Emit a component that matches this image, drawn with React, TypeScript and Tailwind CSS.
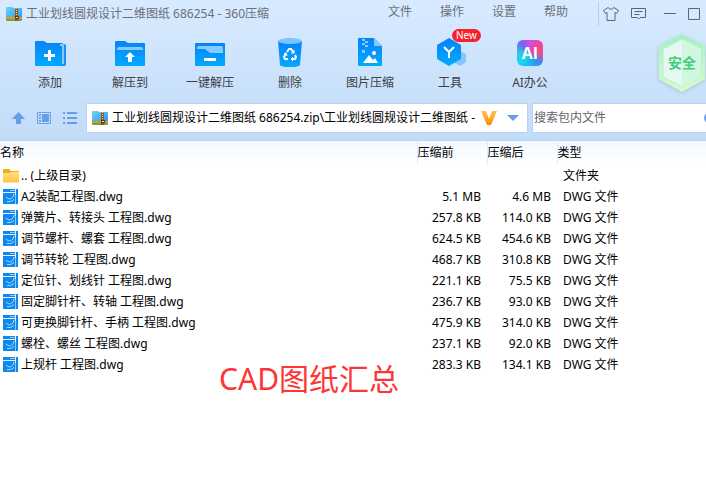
import type { ReactNode } from "react";

type Row = {
  name: string;
  before: string;
  after: string;
  type: string;
};

const rows: Row[] = [
  { name: "A2装配工程图.dwg", before: "5.1 MB", after: "4.6 MB", type: "DWG 文件" },
  { name: "弹簧片、转接头 工程图.dwg", before: "257.8 KB", after: "114.0 KB", type: "DWG 文件" },
  { name: "调节螺杆、螺套 工程图.dwg", before: "624.5 KB", after: "454.6 KB", type: "DWG 文件" },
  { name: "调节转轮 工程图.dwg", before: "468.7 KB", after: "310.8 KB", type: "DWG 文件" },
  { name: "定位针、划线针 工程图.dwg", before: "221.1 KB", after: "75.5 KB", type: "DWG 文件" },
  { name: "固定脚针杆、转轴 工程图.dwg", before: "236.7 KB", after: "93.0 KB", type: "DWG 文件" },
  { name: "可更换脚针杆、手柄 工程图.dwg", before: "475.9 KB", after: "314.0 KB", type: "DWG 文件" },
  { name: "螺栓、螺丝 工程图.dwg", before: "237.1 KB", after: "92.0 KB", type: "DWG 文件" },
  { name: "上规杆 工程图.dwg", before: "283.3 KB", after: "134.1 KB", type: "DWG 文件" },
];

function Gradients() {
  return (
    <svg className="absolute size-0" aria-hidden="true">
      <defs>
        <linearGradient id="blue" x1="0" y1="0" x2="0" y2="1">
          <stop offset="0" stopColor="#0882f8" />
          <stop offset="1" stopColor="#00aaff" />
        </linearGradient>
        <linearGradient id="sky" x1="0" y1="0" x2="1" y2="1">
          <stop offset="0" stopColor="#6fd3fa" />
          <stop offset="1" stopColor="#2a9be8" />
        </linearGradient>
        <linearGradient id="gold" x1="0" y1="0" x2="0" y2="1">
          <stop offset="0" stopColor="#ffe08a" />
          <stop offset="1" stopColor="#ffc53d" />
        </linearGradient>
        <linearGradient id="vip" x1="0" y1="0" x2="0" y2="1">
          <stop offset="0" stopColor="#ffc44a" />
          <stop offset="1" stopColor="#ff8a00" />
        </linearGradient>
        <linearGradient id="shield" x1="0" y1="0" x2="0" y2="1">
          <stop offset="0" stopColor="#9df3bd" />
          <stop offset="0.6" stopColor="#c4f8cd" />
          <stop offset="1" stopColor="#d6fbc9" />
        </linearGradient>
      </defs>
    </svg>
  );
}

function ArchiveIcon() {
  return (
    <svg width="16" height="14" viewBox="0 0 16 14" className="shrink-0">
      <path d="M0 1q0-1 1-1h5l1 1h8q1 0 1 1v9H0z" fill="url(#sky)" />
      <path d="M0 10h16v2H0z" fill="#e8912a" />
      <path d="M0 12h16v1q0 1-1 1H1q-1 0-1-1z" fill="#62a843" />
      <path d="M9 2h3v12H9z" fill="#9a5420" />
      <path d="M10 3h1v1h-1zM10 5h1v1h-1zM10 7h1v1h-1z" fill="#f4c67a" />
      <path d="M9 9h4v3H9z" fill="#6b3410" />
      <path d="M10 10h2v1h-2z" fill="#ffe29a" />
    </svg>
  );
}

function DwgIcon() {
  return (
    <svg width="15" height="15" viewBox="0 0 15 15" className="shrink-0">
      <path d="M0 0h15v15H0z" fill="#0c88ee" />
      <path d="M0 3.500h12M12.500 0v6" fill="none" stroke="#e6f4ff" />
      <path d="M7 1.500h5M12.500 6v9" fill="none" stroke="#8accff" />
      <path d="M3 8q4 4 7 0l1-3M4 12.500q4 1 7-2" fill="none" stroke="#a5d8ff" />
    </svg>
  );
}

function FolderIcon() {
  return (
    <svg width="16" height="14" viewBox="0 0 16 14" className="shrink-0">
      <path d="M0 1q0-1 1-1h5l2 2h7q1 0 1 1v5H0z" fill="#f0ad16" />
      <path d="M0 4h7l1-1h8v9.500q0 1-1 1H1q-1 0-1-1z" fill="url(#gold)" />
    </svg>
  );
}

const icons: Record<string, ReactNode> = {
  add: (
    <>
      <path d="M1 5q0-1 1-1h8l3 2h15q1 0 1 1v22H2q-1 0-1-1z" fill="url(#blue)" />
      <path d="M28 7h2q2 0 2 2v19q0 1-2 1h-2z" fill="#1690fb" />
      <path d="M26 7h3q1 0 1 1v19h-2V9h-2z" fill="#86cbff" />
      <path d="M14 13h3v4h4v3h-4v4h-3v-4h-4v-3h4z" fill="#fff" />
    </>
  ),
  extract: (
    <>
      <path d="M1 5q0-1 1-1h9l3 2h16q1 0 1 1v21q0 1-1 1H2q-1 0-1-1z" fill="url(#blue)" />
      <path d="M3 12q0-2 2-2h22q2 0 2 2v1H3z" fill="#86cbff" />
      <path d="M16 15l5 5h-3v5h-4v-5h-3z" fill="#fff" />
    </>
  ),
  quick: (
    <>
      <rect x="1" y="6" width="30" height="23" rx="1" fill="url(#blue)" />
      <path d="M3 11q0-2 2-2h22q2 0 2 2v5H16l-5-4H3z" fill="#86cbff" />
      <path d="M10 21h12v3H10z" fill="#fff" />
    </>
  ),
  remove: (
    <>
      <path d="M4 4h24l-2 24q-1 2-10 2T6 28z" fill="url(#blue)" />
      <ellipse cx="16" cy="4" rx="12" ry="3" fill="#78c5ff" />
      <g fill="none" stroke="#fff" strokeWidth="2">
        <path d="M13 15l2-3h2l3 4M21 18l1 2-1 2h-4M14 22h-3l-1-2 2-4" />
        <path d="M17 16h3v-3M19 20l-2 2 2 2M10 17l2-1 1 3" strokeWidth="1" />
      </g>
    </>
  ),
  image: (
    <>
      <path d="M4 2q0-1 1-1h15l8 8v19q0 1-1 1H5q-1 0-1-1z" fill="url(#blue)" />
      <path d="M20 1l8 8h-8z" fill="#86cbff" />
      <path d="M8 2h3v2H8zM11 4h3v2h-3zM8 6h3v2H8zM11 8h3v2h-3zM8 13h3v3H8z" fill="#86cbff" />
      <path d="M9 26l6-8 4 5 2-2 3 5z" fill="#fff" />
      <circle cx="20" cy="16" r="2" fill="#fff" />
    </>
  ),
  tools: (
    <>
      <path d="M26 14l6 3v8l-6 4-7-4v-7z" fill="#86c5ff" />
      <path d="M15 1l12 7v14l-12 7-12-7V8z" fill="url(#blue)" />
      <path d="M10 10l5 5 5-5M15 15v6" fill="none" stroke="#fff" strokeWidth="2" />
    </>
  ),
};

function Tool({ icon, label }: { icon: string; label: string }) {
  return (
    <button className="flex w-20 shrink-0 flex-col items-center gap-1.5 text-[#3c4043]">
      <span className="relative flex h-8 w-8 items-center justify-center">
        {icon === "ai" ? (
          <span className="flex size-[26px] items-center justify-center rounded-md bg-[conic-gradient(#d64be0,#f0449c,#ee4f84,#3a86f5,#1fb4f5,#19d8ea,#2bcbe0,#6a6cf0,#d64be0)] font-['Open_Sans'] text-base font-bold text-white">
            AI
          </span>
        ) : (
          <svg width="32" height="32" viewBox="0 0 32 32">{icons[icon]}</svg>
        )}
        {icon === "tools" && (
          <span className="absolute -top-2 left-[18px] h-[13px] rounded-full bg-[#f5222d] px-1 text-[10px] leading-[13px] text-white">New</span>
        )}
      </span>
      <span className="leading-4">{label}</span>
    </button>
  );
}

function TitleBar() {
  return (
    <header className="flex h-[27px] items-center pl-1.5 text-[#6b7078]">
      <ArchiveIcon />
      <h1 className="ml-1 whitespace-nowrap">工业划线圆规设计二维图纸 686254 - 360压缩</h1>
      <nav className="ml-auto flex gap-7 pb-1">
        <button>文件</button>
        <button>操作</button>
        <button>设置</button>
        <button>帮助</button>
      </nav>
      <div className="ml-[30px] flex h-6 items-center border-l border-[#b4cdec] pl-1">
        <button aria-label="换肤">
          <svg width="16" height="14" viewBox="0 0 16 14" fill="none" stroke="#5d646e">
            <path d="M5 .5L.5 3.500l2 3L4 5.500v8h8v-8l1.500 1 2-3L11 .5Q8 4 5 .5z" />
          </svg>
        </button>
        <button aria-label="反馈" className="ml-3">
          <svg width="15" height="14" viewBox="0 0 15 14" fill="none" stroke="#5d646e">
            <path d="M.5 1.500h14v9H9L7.500 12 6 10.500H.5zM3.500 4.500h8M3.500 7.500h5" />
          </svg>
        </button>
        <button aria-label="最小化" className="ml-[18px]">
          <svg width="12" height="12" viewBox="0 0 12 12" stroke="#5d646e"><path d="M0 5.500h12" /></svg>
        </button>
        <button aria-label="最大化" className="mr-1.5 ml-3">
          <svg width="12" height="12" viewBox="0 0 12 12" fill="none" stroke="#5d646e"><path d="M.5.5h11v11H.5z" /></svg>
        </button>
      </div>
    </header>
  );
}

function Shield() {
  return (
    <div className="relative ml-auto flex h-[52px] w-12 shrink-0 items-center justify-center">
      <svg width="48" height="58" viewBox="0 0 48 58" className="absolute inset-x-0 -top-0.5 drop-shadow-sm">
        <path d="M24 0l23 11v33L24 57 1 44V11z" fill="url(#shield)" />
        <path d="M24 4l19 10v28L24 52 5 42V14z" fill="#e6f8f2" stroke="#b5eecb" />
        <path d="M24 4l19 10v28L24 52z" fill="#d2f6e0" />
      </svg>
      <span className="relative text-sm leading-4 font-bold text-[#3dd07c]">安全</span>
    </div>
  );
}

function AddressBar() {
  return (
    <div className="mt-3 flex h-[30px] items-center">
      <div className="flex w-[86px] shrink-0 items-center gap-3 pl-3 text-[#6b9ce8]">
        <button aria-label="向上">
          <svg width="13" height="12" viewBox="0 0 13 12" fill="currentColor"><path d="M6.500 0L13 7H9v5H4V7H0z" /></svg>
        </button>
        <button aria-label="预览">
          <svg width="14" height="12" viewBox="0 0 14 12" fill="none" stroke="currentColor">
            <path d="M.5.5h13v11H.5z" />
            <path d="M5 2h7v8H5zM2 2h2v2H2zM2 5h2v2H2zM2 8h2v2H2z" fill="currentColor" stroke="none" />
          </svg>
        </button>
        <button aria-label="列表">
          <svg width="14" height="12" viewBox="0 0 14 12" fill="currentColor">
            <path d="M0 0h2v2H0zM4 0h10v2H4zM0 5h2v2H0zM4 5h10v2H4zM0 10h2v2H0zM4 10h10v2H4z" />
          </svg>
        </button>
      </div>
      <div className="flex h-full min-w-0 flex-1 items-center border border-[#b8d4f4] bg-white pl-[5px]">
        <ArchiveIcon />
        <input
          aria-label="路径"
          defaultValue="工业划线圆规设计二维图纸 686254.zip\工业划线圆规设计二维图纸 -"
          className="ml-1 min-w-0 flex-1 bg-transparent text-black outline-none"
        />
        <svg width="16" height="14" viewBox="0 0 16 14" className="shrink-0"><path d="M0 0h5l3 8 3-8h5l-6 14H6z" fill="url(#vip)" /></svg>
        <button aria-label="历史路径" className="mr-2 ml-2.5">
          <svg width="12" height="6" viewBox="0 0 12 6"><path d="M0 0h12L6 6z" fill="#6b9ce8" /></svg>
        </button>
      </div>
      <div className="ml-1 flex h-full w-[174px] shrink-0 items-center overflow-hidden border-y border-l border-[#b8d4f4] bg-white pl-px">
        <input aria-label="搜索" placeholder="搜索包内文件" className="w-[170px] shrink-0 outline-none placeholder:text-[#5f6368]" />
        <svg width="12" height="12" viewBox="0 0 12 12" className="shrink-0"><circle cx="6" cy="6" r="5" fill="none" stroke="#6b9ce8" strokeWidth="2" /></svg>
      </div>
    </div>
  );
}

function FileTable() {
  return (
    <table className="w-full table-fixed text-black">
      <thead className="bg-linear-to-b from-[#f2f8ff] to-white">
        <tr className="h-6 text-left">
          <th className="font-normal">名称</th>
          <th className="w-[70px] border-l border-[#e1edfa] font-normal">压缩前</th>
          <th className="w-[70px] border-l border-[#e1edfa] font-normal">压缩后</th>
          <th className="w-[149px] border-l border-[#e1edfa] font-normal">类型</th>
        </tr>
      </thead>
      <tbody>
        <tr className="h-[21px]">
          <td><span className="flex items-center gap-0.5 pl-[3px]"><FolderIcon />.. (上级目录)</span></td>
          <td></td>
          <td></td>
          <td className="pl-1.5">文件夹</td>
        </tr>
        {rows.map((r) => (
          <tr key={r.name} className="h-[21px]">
            <td><span className="flex items-center gap-[3px] pl-[3px]"><DwgIcon />{r.name}</span></td>
            <td className="pr-1.5 text-right">{r.before}</td>
            <td className="pr-1.5 text-right">{r.after}</td>
            <td className="pl-1.5">{r.type}</td>
          </tr>
        ))}
      </tbody>
    </table>
  );
}

export default function App() {
  return (
    <div className="min-h-screen overflow-hidden bg-white font-['Noto_Sans','Noto_Sans_CJK_SC',sans-serif] text-xs">
      <Gradients />
      <div className="border-b border-[#b9d7fb] bg-linear-to-b from-[#d8eaff] to-[#c2dcf8] pb-[7px]">
        <TitleBar />
        <div className="flex items-start pt-2.5 pl-2.5">
          <Tool icon="add" label="添加" />
          <Tool icon="extract" label="解压到" />
          <Tool icon="quick" label="一键解压" />
          <Tool icon="remove" label="删除" />
          <Tool icon="image" label="图片压缩" />
          <Tool icon="tools" label="工具" />
          <Tool icon="ai" label="AI办公" />
          <Shield />
        </div>
        <AddressBar />
      </div>
      <main>
        <FileTable />
        <p className="-mt-3 pl-[219px] text-[30px] leading-8 text-[#fb3636]">CAD图纸汇总</p>
      </main>
    </div>
  );
}
